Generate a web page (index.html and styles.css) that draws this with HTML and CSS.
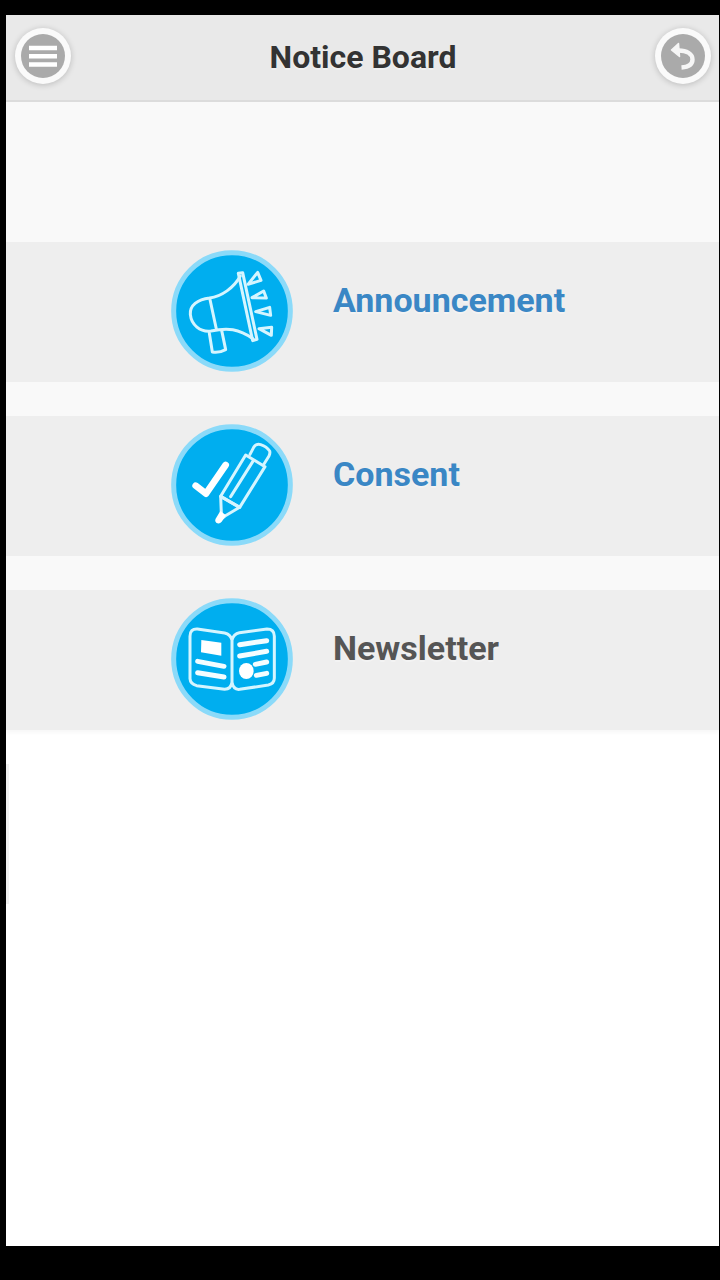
FILE: index.html
```html
<!DOCTYPE html>
<html lang="en">
<head>
<meta charset="utf-8">
<title>Notice Board</title>
<link rel="stylesheet" href="styles.css">
</head>
<body>
<div class="page">
  <header class="bar">
    <button class="round" aria-label="Menu">
      <svg viewBox="0 0 44 44"><path class="menu-lines" d="M8 14H36M8 22.2H36M8 30.5H36"/></svg>
    </button>
    <h1 class="title">Notice Board</h1>
    <button class="round" aria-label="Back">
      <svg viewBox="0 0 44 44"><path class="back-curve" d="M16 16.5C26 16 31.5 20 31.5 25.5C31.5 30 27.5 33 20.5 33.5"/><path class="back-head" d="M10.5 16L17.5 9.5L18.5 22.5Z"/></svg>
    </button>
  </header>
  <main class="list">
    <a class="row link">
      <svg class="icon" viewBox="33 30 366 366">
        <circle class="disc" cx="216" cy="213" r="175"/>
        <g class="line">
          <path d="M235 100L248 98L291 298L278 302Z"/>
          <path d="M241 108C222 143 184 170 149 174C112 178 89 197 91 223C94 254 120 277 153 273C203 262 236 266 279 296M149 174L169 267M148 280L157 336Q176 340 197 329L185 271"/>
          <path d="M264 133L293 97L303 121ZM276 173L311 153L319 174ZM287 215L329 202L332 226ZM297 266L335 262L334 286Z"/>
        </g>
      </svg>
      <span class="label">Announcement</span>
    </a>
    <a class="row link">
      <svg class="icon" viewBox="33 30 366 366">
        <circle class="disc" cx="216" cy="213" r="175"/>
        <path class="check" d="M107 215L138 239L197 153"/>
        <g class="line">
          <path d="M257 123L315 158L239 280L182 247Z"/>
          <path d="M280 140L212 248M182 247L184 299L174 323L195 306L239 280L182 247"/>
          <path d="M270 121L281 100Q288 88 302 92Q320 98 329 111Q331 117 327 126L312 150"/>
        </g>
        <path class="tip" d="M181 291L198 304L185 323Q179 331 170 327Q163 321 167 314Z"/>
      </svg>
      <span class="label">Consent</span>
    </a>
    <a class="row">
      <svg class="icon" viewBox="33 30 366 366">
        <circle class="disc" cx="216" cy="213" r="175"/>
        <path class="line" d="M216 156Q211 139 194 135L112 123Q90 122 90 145V272Q91 288 110 293L194 304Q213 304 216 283Q220 306 239 304L325 291Q343 287 343 270V145Q343 123 321 123L238 134Q221 137 216 156V287"/>
        <path class="fill" d="M124 156L184 164V203L123 193Z"/>
        <path class="copy" d="M113 220L192 235M113 254L192 267M239 170L320 158M239 204L320 190M286 229L320 222M289 262L320 256"/>
        <ellipse class="fill" cx="259" cy="249" rx="22" ry="24"/>
      </svg>
      <span class="label">Newsletter</span>
    </a>
  </main>
  <div class="scroll-edge"></div>
</div>
</body>
</html>
```
FILE: styles.css
```css
* { box-sizing: border-box; }
body {
  margin: 0;
  height: 1280px;
  padding: 15px 1px 34px 6px;
  background: #000;
  font-family: Roboto, "Liberation Sans", sans-serif;
  overflow: hidden;
}
.page { height: 1231px; background: #fff; }
.bar {
  display: flex;
  align-items: flex-start;
  justify-content: space-between;
  height: 87px;
  padding: 13px 8px 0 9px;
  background: #e9e9e9;
  border-bottom: 2px solid #dcdcdc;
}
.round {
  width: 56px;
  height: 56px;
  padding: 6px;
  border: 0;
  border-radius: 50%;
  background: #fafafa;
  box-shadow: 0 1px 6px rgba(0, 0, 0, .2);
}
.round svg { display: block; width: 44px; height: 44px; border-radius: 50%; background: #aaa; }
.menu-lines { fill: none; stroke: #fff; stroke-width: 4.4; }
.back-curve { fill: none; stroke: #f6f6f6; stroke-width: 4.4; }
.back-head { fill: #f6f6f6; stroke: #f6f6f6; stroke-width: 1.5; stroke-linejoin: round; }
.title {
  margin: 10px 0 0;
  font-size: 32px;
  line-height: 38px;
  font-weight: 700;
  color: #333;
  text-shadow: 0 2px 0 #f0f0f0;
}
.list {
  display: flex;
  flex-direction: column;
  gap: 34px;
  padding-top: 140px;
  background: #f9f9f9;
  box-shadow: 0 3px 4px rgba(0, 0, 0, .03);
}
.row {
  display: flex;
  align-items: flex-start;
  gap: 40px;
  height: 140px;
  padding: 8px 0 0 165px;
  background: #eee;
  color: #555;
}
.link { color: #3a87c5; }
.icon { width: 122px; height: 122px; }
.label {
  margin-top: 30px;
  font-size: 34px;
  line-height: 40px;
  font-weight: 700;
  text-shadow: 0 2px 0 #f3f3f3;
}
.disc { fill: #00aeef; stroke: #8bdaf9; stroke-width: 15; }
.line { fill: none; stroke: #d5f5ff; stroke-width: 9; stroke-linejoin: round; stroke-linecap: round; }
.check { fill: none; stroke: #fff; stroke-width: 20; stroke-linecap: round; stroke-linejoin: round; }
.copy { fill: none; stroke: #f4fdff; stroke-width: 15; stroke-linecap: round; }
.fill, .tip { fill: #fff; }
.scroll-edge { width: 3px; height: 140px; margin-top: 34px; background: #f0f0f0; }
```
